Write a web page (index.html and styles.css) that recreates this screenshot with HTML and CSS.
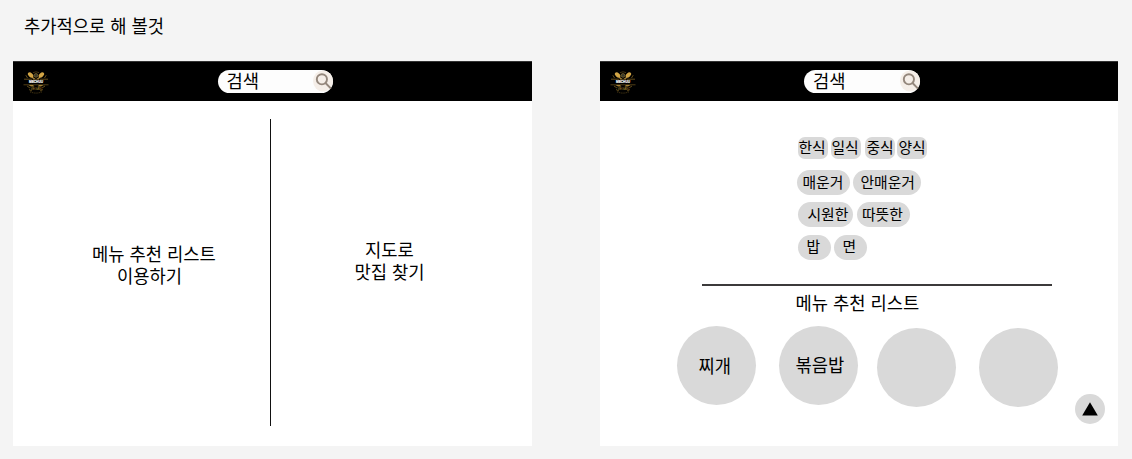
FILE: index.html
```html
<!DOCTYPE html>
<html lang="ko">
<head>
<meta charset="utf-8">
<title>추가적으로 해 볼것</title>
<link rel="stylesheet" href="styles.css">
</head>
<body>
<svg width="0" height="0" class="defs" aria-hidden="true">
  <symbol id="logo" viewBox="0 0 26 24">
    <g fill="none" stroke="#a8832f" stroke-width=".8">
      <path d="M4.500 8 2.800 5.200M7 5 10 8M19 5 16 8M21.500 8l1.700-2.800M1 9.200h8M17 9.200h8" opacity=".75"/>
      <path d="M0.500 14.800h25" opacity=".6"/>
      <path d="M4 16 7 18M22 16 19 18M6 19.500 9 21M20 19.500 17 21" opacity=".7"/>
      <path d="M7 21.800q6 2.600 12 0" stroke-dasharray="1.200 1" opacity=".6"/>
      <path d="M10 2.600q3-1.600 6 0" opacity=".5"/>
    </g>
    <g fill="#d2a546">
      <ellipse cx="7.600" cy="5" rx="2" ry="3.200" transform="rotate(-46 7.600 5)"/>
      <ellipse cx="18.400" cy="5" rx="2" ry="3.200" transform="rotate(46 18.400 5)"/>
      <path d="m8.500 6 4.500 3.200L17.500 6l-1.500 3.600h-6z" opacity=".75"/>
      <path d="M5.500 15h4.500l1.500 1.600H8zM20.500 15H16l-1.500 1.600H18z" opacity=".75"/>
    </g>
    <circle cx="13" cy="5.400" r="1.900" fill="#393a2c" stroke="#8e742f" stroke-width=".6"/>
    <text x="13" y="13.300" class="logo-name" text-anchor="middle" textLength="14" lengthAdjust="spacingAndGlyphs">MECHUU</text>
    <text x="13" y="19.500" class="logo-sub" text-anchor="middle" textLength="11">VEGAN</text>
  </symbol>
  <symbol id="search" viewBox="0 0 20 22">
    <ellipse cx="10" cy="11" rx="10" ry="10.500" fill="#f5eee8"/>
    <g fill="none" stroke="#94877c" stroke-width="1.900">
      <circle cx="8.900" cy="9.300" r="5.100"/>
      <path d="m12.500 13 5.500 5.700"/>
    </g>
  </symbol>
</svg>

<h1 class="title">추가적으로 해 볼것</h1>
<main class="screens">
  <section class="screen">
    <header class="bar">
      <svg class="logo"><use href="#logo"/></svg>
      <div class="search"><span>검색</span><svg class="search-icon"><use href="#search"/></svg></div>
    </header>
    <div class="split">
      <p class="choice choice-list">메뉴 추천 리스트<br><span class="second-line">이용하기</span></p>
      <div class="divider"></div>
      <p class="choice choice-map">지도로<br>맛집 찾기</p>
    </div>
  </section>

  <section class="screen">
    <header class="bar">
      <svg class="logo"><use href="#logo"/></svg>
      <div class="search"><span>검색</span><svg class="search-icon"><use href="#search"/></svg></div>
    </header>
    <div class="filters">
      <div class="chips kinds">
        <span class="chip">한식</span><span class="chip">일식</span><span class="chip third">중식</span><span class="chip fourth">양식</span>
      </div>
      <div class="chips spicy"><span class="chip">매운거</span><span class="chip">안매운거</span></div>
      <div class="chips temp"><span class="chip">시원한</span><span class="chip">따뜻한</span></div>
      <div class="chips base"><span class="chip">밥</span><span class="chip">면</span></div>
    </div>
    <div class="rule"></div>
    <h2 class="list-title">메뉴 추천 리스트</h2>
    <div class="menus">
      <div class="menu stew">찌개</div>
      <div class="menu rice">볶음밥</div>
      <div class="menu empty"></div>
      <div class="menu empty"></div>
    </div>
    <button class="to-top" aria-label="위로"><svg width="16" height="14" viewBox="0 0 16 14"><path d="M8 0.300 15.800 13.500H0.200z"/></svg></button>
  </section>
</main>
</body>
</html>
```
FILE: styles.css
```css
* { box-sizing: border-box; }
body {
  margin: 0;
  height: 459px;
  overflow: hidden;
  background: #f4f4f4;
  color: #000;
  font: 400 17.700px/22px "Noto Sans CJK KR", sans-serif;
}
.defs { position: absolute; }
.title { margin: 0; padding: 14px 0 0 24px; height: 61px; font-size: 17.700px; font-weight: 400; }
.screens { display: flex; gap: 68px; padding-left: 13px; }
.screen { position: relative; flex: none; width: 518.500px; height: 385px; background: #fff; }
.bar { display: flex; height: 40px; background: #000; border-top: 1px solid #333; }
.logo { width: 26px; height: 24px; margin: 8px 0 0 10px; }
.logo-name { font: 700 4.200px "Liberation Sans", sans-serif; fill: #fff; stroke: #fff; stroke-width: .2; }
.logo-sub { font: 400 3.500px "Liberation Sans", sans-serif; fill: #a8832f; }
.search {
  display: flex;
  justify-content: space-between;
  width: 115.500px;
  height: 23px;
  margin: 8px 0 0 168.500px;
  padding-left: 9px;
  border-radius: 12px;
  background: #fdfdfd;
  line-height: 21px;
}
.search-icon { width: 20px; height: 22px; }

.split { display: flex; height: 345px; }
.choice { margin: 0; text-align: center; white-space: nowrap; }
.choice-list { width: 256px; padding: 141px 0 0 26px; }
.second-line { padding-right: 9px; }
.divider { width: 1.500px; height: 307px; margin: 18px 0 0 0.500px; background: #111; }
.choice-map { width: 237px; padding-top: 137px; }

.filters { padding: 36px 0 0 197px; font-size: 14.800px; }
.chips { display: flex; gap: 3px; }
.chip { height: 25px; border-radius: 12.500px; background: #d9d9d9; line-height: 23px; white-space: nowrap; }
.kinds { margin-left: 1px; }
.kinds .chip { width: 30px; height: 22px; padding-left: 1px; border-radius: 7px; line-height: 20px; }
.kinds .third { margin-left: 1px; padding-left: 2px; }
.kinds .fourth { padding-left: 2px; margin-left: -1px; }
.spicy { margin-top: 10.500px; }
.spicy .chip { width: 53px; padding-left: 6px; line-height: 24px; }
.spicy .chip + .chip { width: 68px; padding-left: 8px; }
.temp { gap: 4.500px; margin: 7.500px 0 0 1px; }
.temp .chip { width: 55px; padding-left: 10px; line-height: 23px; }
.temp .chip + .chip { width: 53px; padding-left: 5px; }
.base { margin: 7.500px 0 0 1px; }
.base .chip { width: 33px; padding-left: 9px; line-height: 22px; }

.rule { width: 350px; height: 2px; margin: 24.500px 0 0 102px; background: #3c3a3b; }
.list-title { margin: 5px 0 0 196px; font-size: 17.700px; font-weight: 400; }
.menus { display: flex; margin: 13px 0 0 77px; }
.menu { flex: none; width: 79px; height: 79px; border-radius: 50%; background: #d9d9d9; line-height: 77px; }
.stew { padding-left: 22px; line-height: 79px; }
.rice { margin-left: 23px; padding-left: 17px; }
.empty { margin: 1.500px 0 0 19px; }
.empty + .empty { margin-left: 23px; }
.to-top {
  position: absolute;
  right: 13.500px;
  bottom: 22px;
  width: 30px;
  height: 30px;
  padding: 6px 7px;
  border: 0;
  border-radius: 50%;
  background: #d9d9d9;
}
.to-top svg { display: block; margin-top: -1px; }
```
